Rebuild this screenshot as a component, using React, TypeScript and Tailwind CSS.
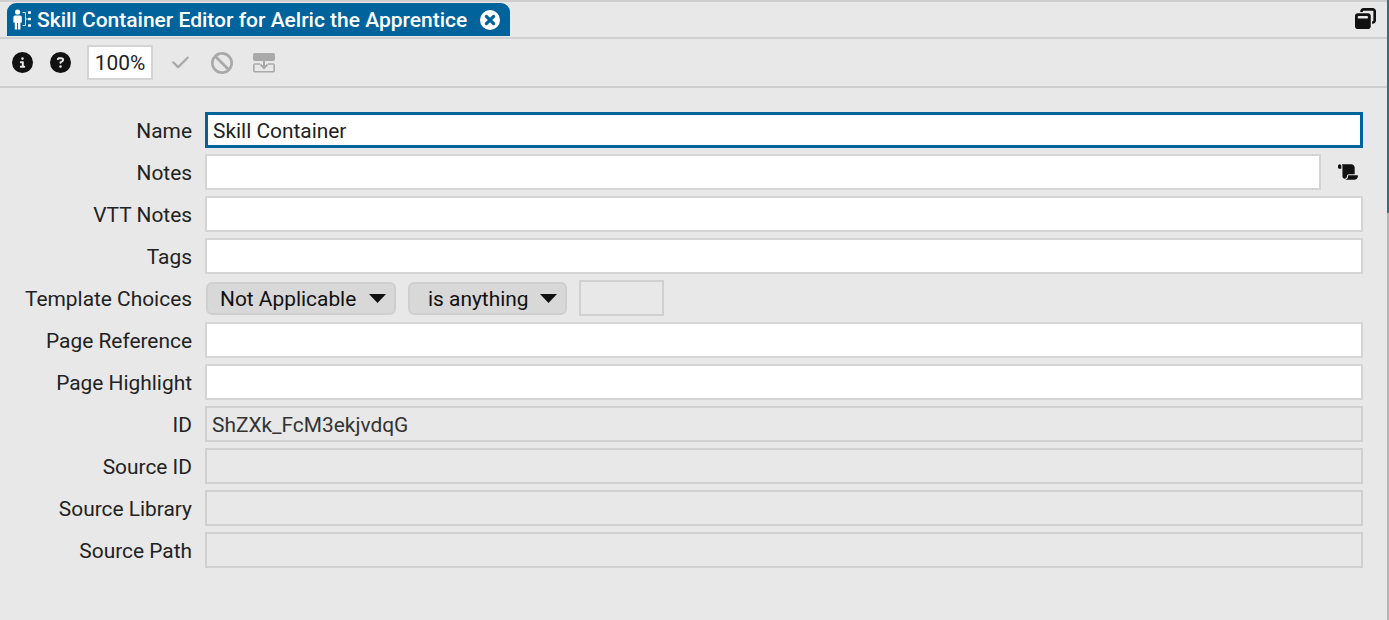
import React from "react";
import { FaCircleInfo, FaCircleQuestion, FaCheck, FaBan, FaWindowRestore, FaScroll } from "react-icons/fa6";

const Caret = () => (
  <svg width="17" height="9" viewBox="0 0 17 9" className="shrink-0">
    <path d="M0 0H17L8.5 9Z" fill="#111" />
  </svg>
);

const CloseIcon = () => (
  <svg width="20" height="20" viewBox="0 0 20 20" className="ml-auto shrink-0">
    <circle cx="10" cy="10" r="10" fill="#fff" />
    <path d="M6.4 6.4 13.6 13.6M13.6 6.4 6.4 13.6" stroke="#00639c" strokeWidth="3.2" strokeLinecap="round" />
  </svg>
);

const TabIcon = () => (
  <svg width="19" height="21" viewBox="0 0 19 21" className="shrink-0">
    <circle cx="4.6" cy="3" r="2.6" fill="#fff" />
    <path d="M2 6.4h5.2A1.6 1.6 0 0 1 8.8 8v5.6H7.4V20.5H5.1v-6.5H4.1v6.5H1.8V13.6H.4V8A1.6 1.6 0 0 1 2 6.4Z" fill="#fff" />
    <path d="M9.6 3.5H12.5V16.5H9.6M12.5 10H15" stroke="#cfdfe9" strokeWidth="1" fill="none" />
    <rect x="15" y="2.2" width="3" height="2.6" rx="0.6" fill="#fff" />
    <rect x="15" y="8.7" width="3" height="2.6" rx="0.6" fill="#fff" />
    <rect x="15" y="15.2" width="3" height="2.6" rx="0.6" fill="#fff" />
  </svg>
);

const ApplyTemplate = () => (
  <svg width="22" height="20" viewBox="0 0 22 20" className="shrink-0">
    <rect x="0" y="0" width="22" height="8" rx="2" fill="#a9a9a9" />
    <path d="M11 8v6M7.5 11.5 11 15l3.5-3.5" stroke="#a9a9a9" strokeWidth="2" fill="none" />
    <path d="M7 11H2a1.2 1.2 0 0 0-1.2 1.2v5.4A1.2 1.2 0 0 0 2 18.8h18a1.2 1.2 0 0 0 1.2-1.2v-5.4A1.2 1.2 0 0 0 20 11h-5" stroke="#a9a9a9" strokeWidth="1.6" fill="none" />
  </svg>
);

function Label({ children }: { children: React.ReactNode }) {
  return <div className="w-[192px] shrink-0 text-right whitespace-nowrap text-[20.9px] leading-[36px] text-[#222] translate-y-[1px]">{children}</div>;
}

function Field({ value = "", disabled = false, focus = false, className = "flex-1" }: { value?: string; disabled?: boolean; focus?: boolean; className?: string }) {
  const base = focus
    ? "border-[3px] border-[#00639c] bg-white pl-[5px]"
    : disabled
    ? "border-2 border-[#d0d0d0] bg-[#e8e8e8] pl-[5px]"
    : "border-2 border-[#d4d4d4] bg-white pl-[6px]";
  return (
    <div className={`h-[36px] min-w-0 flex items-center text-[20.9px] whitespace-nowrap pt-[3px] ${disabled ? "text-[#333]" : "text-[#222]"} ${base} ${className}`}>
      {value}
    </div>
  );
}

function Row({ label, children }: { label: string; children: React.ReactNode }) {
  return (
    <div className="flex items-center h-[36px] gap-[13px]">
      <Label>{label}</Label>
      <div className="flex flex-1 items-center min-w-0">{children}</div>
    </div>
  );
}

function Select({ text, className }: { text: string; className: string }) {
  return (
    <div className={`h-[33px] flex items-center justify-between rounded-[6px] border-2 border-[#cfcfcf] bg-[#d8d8d8] text-[20.9px] text-[#111] whitespace-nowrap ${className}`}>
      <span className="translate-y-[2px]">{text}</span>
      <Caret />
    </div>
  );
}

export default function App() {
  return (
    <div className="w-[1389px] h-[620px] overflow-hidden flex bg-[#e8e8e8] font-['Roboto',sans-serif]">
      <div className="flex-1 min-w-0 flex flex-col">
        <div className="h-[39px] shrink-0 flex items-start justify-between border-b-2 border-[#cfcfcf] border-t-2 border-t-[#cfcfcf] pl-[7px] pr-[11px]">
          <div className="mt-[1px] h-[33px] w-[503px] rounded-t-[9px] bg-[#00639c] flex items-center pl-[6px] pr-[10px] text-white">
            <TabIcon />
            <span className="ml-[5px] translate-y-[1px] text-[21px] font-medium whitespace-nowrap">Skill Container Editor for Aelric the Apprentice</span>
            <CloseIcon />
          </div>
          <div className="mt-[6px] text-[#111]"><FaWindowRestore className="text-[21px]" /></div>
        </div>
        <div className="h-[49px] shrink-0 flex items-center border-b-2 border-[#cfcfcf] pl-[12px]">
          <FaCircleInfo className="text-[21px] text-[#111]" />
          <FaCircleQuestion className="ml-[17px] text-[21px] text-[#111]" />
          <div className="ml-[16px] w-[66px] h-[35px] border-2 border-[#d4d4d4] bg-white flex items-center justify-center pt-[2px] text-[20.9px] text-[#222]">100%</div>
          <FaCheck className="ml-[18px] text-[19px] text-[#a9a9a9]" />
          <FaBan className="ml-[21px] text-[22px] text-[#a9a9a9]" />
          <div className="ml-[20px]"><ApplyTemplate /></div>
        </div>
        <div className="flex flex-col gap-[6px] pt-[24px] pr-[24px]">
          <Row label="Name"><Field value="Skill Container" focus /></Row>
          <Row label="Notes">
            <Field />
            <div className="w-[42px] shrink-0 flex justify-end pr-[5px]"><FaScroll className="text-[20px] text-[#111]" /></div>
          </Row>
          <Row label="VTT Notes"><Field /></Row>
          <Row label="Tags"><Field /></Row>
          <Row label="Template Choices">
            <Select text="Not Applicable" className="ml-[1px] w-[190px] pl-[12px] pr-[8px]" />
            <Select text="is anything" className="ml-[12px] w-[159px] pl-[18px] pr-[8px]" />
            <Field disabled className="ml-[12px] w-[85px]" />
          </Row>
          <Row label="Page Reference"><Field /></Row>
          <Row label="Page Highlight"><Field /></Row>
          <Row label="ID"><Field value="ShZXk_FcM3ekjvdqG" disabled /></Row>
          <Row label="Source ID"><Field disabled /></Row>
          <Row label="Source Library"><Field disabled /></Row>
          <Row label="Source Path"><Field disabled /></Row>
        </div>
      </div>
      <div className="w-[2px] shrink-0 bg-[linear-gradient(to_bottom,#2f6f80_0,#2f6f80_213px,#b5b5b5_213px,#b5b5b5_100%)]" />
    </div>
  );
}
